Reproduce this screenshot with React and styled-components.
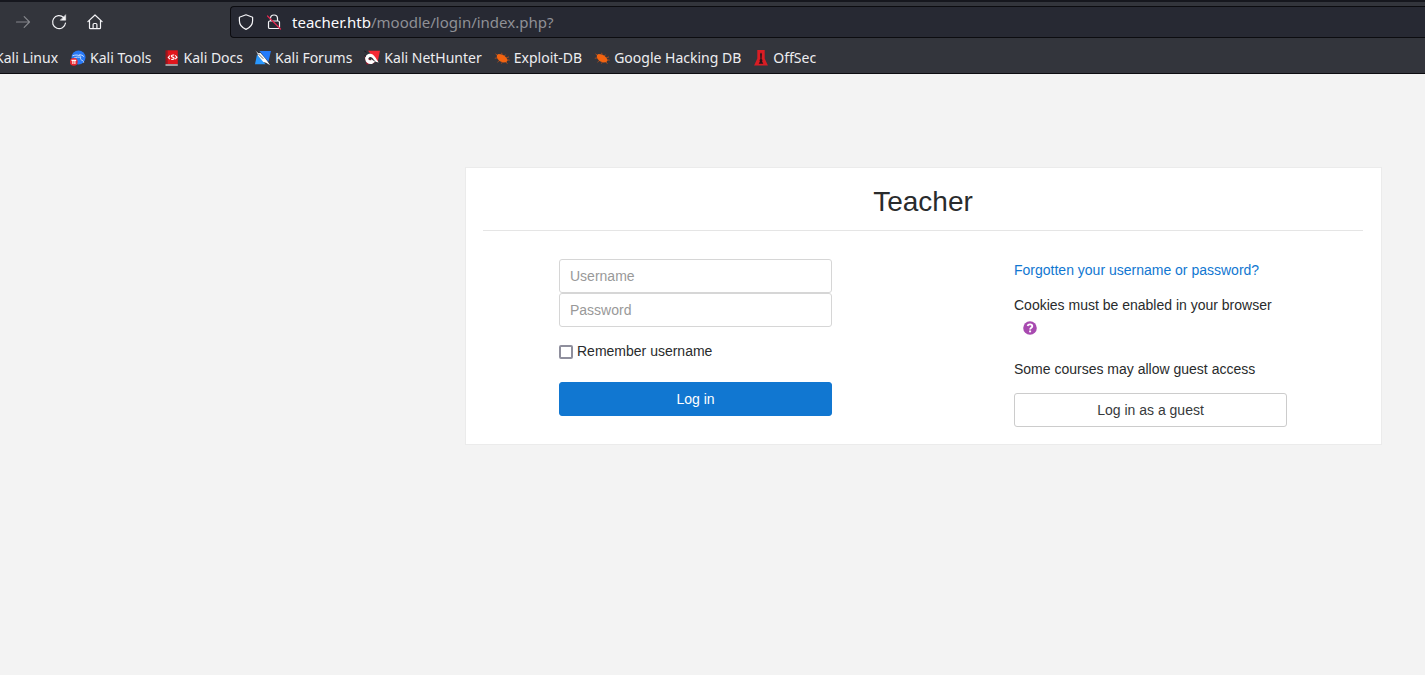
import React from 'react';
import styled, { createGlobalStyle } from 'styled-components';

const GlobalStyle = createGlobalStyle`
  *, *::before, *::after { box-sizing: border-box; }
  body {
    margin: 0;
    background: #f3f3f3;
    color: #292b2c;
    font: 14px/23px "Liberation Sans", Arial, sans-serif;
  }
`;

const Browser = styled.header`
  height: 74px;
  overflow: hidden;
  background: #33353c;
  border-top: 2px solid #16171e;
  border-bottom: 1px solid #0c0c10;
  color: #f4f4f7;
  font-family: "Noto Sans", sans-serif;
`;

const NavBar = styled.div`
  display: flex;
  align-items: center;
  height: 40px;
  padding-left: 12px;
`;

const IconButton = styled.button`
  display: flex;
  padding: 3px;
  margin-right: 14px;
  border: 0;
  background: none;
  color: #f4f4f7;
  &:disabled { color: #85868b; }
`;

const ToolIcon = styled.svg`
  display: block;
  width: 16px;
  height: 16px;
  fill: none;
  stroke: currentColor;
  stroke-width: 1.2;
  stroke-linecap: round;
  stroke-linejoin: round;
`;

const AddressBar = styled.div`
  display: flex;
  flex: 1;
  align-items: center;
  gap: 12px;
  height: 32px;
  margin-left: 110px;
  padding-left: 7px;
  border: 1px solid #0c0c10;
  border-right: 0;
  border-radius: 4px 0 0 4px;
  background: #272933;
`;

const Address = styled.span`
  margin-left: -2px;
  color: #8f9096;
  font-size: 15px;
  line-height: 20px;
  white-space: nowrap;
`;

const Host = styled.span`
  color: #fbfbfe;
`;

const Bookmarks = styled.nav`
  display: flex;
  align-items: center;
  gap: 12px;
  height: 31px;
  margin-left: -5px;
`;

const Bookmark = styled.a`
  display: flex;
  align-items: center;
  gap: 4px;
  color: #ededf0;
  font-size: 14px;
  line-height: 20px;
  text-decoration: none;
  white-space: nowrap;
`;

const Favicon = styled.svg`
  display: block;
  width: 16px;
  height: 16px;
`;

const Page = styled.main`
  padding: 93px 43px 48px 465px;
  @media (max-width: 1200px) { padding-left: 43px; }
`;

const Card = styled.section`
  padding: 17px 18px 17px 17px;
  border: 1px solid #ebebeb;
  background: #fff;
`;

const Title = styled.h1`
  margin: 0;
  padding-bottom: 12px;
  border-bottom: 1px solid #e5e5e5;
  font-size: 28px;
  font-weight: 400;
  line-height: 33px;
  text-align: center;
`;

const Columns = styled.div`
  display: grid;
  grid-template-columns: 1fr 1fr;
  gap: 182px;
  padding: 28px 76px 0;
  @media (max-width: 1000px) { gap: 40px; padding: 28px 20px 0; }
`;

const LoginForm = styled.form`
  display: flex;
  flex-direction: column;
`;

const TextField = styled.input`
  display: block;
  width: 100%;
  height: 34px;
  padding: 0 10px;
  border: 1px solid #d6d6d6;
  border-radius: 3px;
  background: #fff;
  color: #55595c;
  font: inherit;
  &::placeholder { color: #999; opacity: 1; }
`;

const Remember = styled.label`
  display: flex;
  align-items: center;
  gap: 4px;
  margin: 13px 0 19px;
`;

const Checkbox = styled.input`
  appearance: none;
  width: 14px;
  height: 14px;
  margin: 0;
  border: 2px solid #8f8f9d;
  border-radius: 2px;
  background: #fff;
  &:checked { background: #1177d1; }
`;

const Button = styled.button`
  width: 100%;
  height: 34px;
  padding: 0;
  border: 1px solid ${(p) => (p.$primary ? '#1177d1' : '#ccc')};
  border-radius: 3px;
  background: ${(p) => (p.$primary ? '#1177d1' : '#fff')};
  color: ${(p) => (p.$primary ? '#fff' : '#373a3c')};
  font: inherit;
  cursor: pointer;
`;

const Link = styled.a`
  color: #1177d1;
  text-decoration: none;
  &:hover { text-decoration: underline; }
`;

const Cookies = styled.div`
  margin: 12px 0 20px;
`;

const HelpButton = styled.button`
  display: flex;
  align-items: center;
  height: 21px;
  padding: 0;
  margin-left: 9px;
  border: 0;
  background: none;
`;

const HelpIcon = styled.svg`
  display: block;
  width: 14px;
  height: 14px;
`;

const GuestText = styled.p`
  margin: 0 0 12px;
`;

const Bug = () => (
  <Favicon viewBox="0 0 16 16" aria-hidden="true">
    <path d="M1.5 3.8 4 5.600M.8 8.300l3.700-.8M3.500 12.200l2.600-2.300M7.500 2.800l.8 2M11.500 4.600 10 6.500M12.300 7.800l2.700-.9M12.600 9.800l3.200.4M7.500 13.600l1.200-2.500M12 11.800l1.400 2" fill="none" stroke="#b94f1b" strokeWidth=".8" />
    <path d="M2.800 5.200 4.500 3.900l2.300.3 3.300 1.400 2.500 2.300 1 2.500-1.400 1.800-2.900.4-3.400-1.300-2.300-2.400-.7-2z" fill="#f26310" />
  </Favicon>
);

const icons = {
  tools: (
    <Favicon viewBox="0 0 16 16" aria-hidden="true">
      <circle cx="8.500" cy="7.500" r="7" fill="#2878f4" />
      <path d="M2.500 5.800c3.200-1.300 6-.9 8.400.5M3.500 8.400c3-1.700 5.400-1.500 7.300-.8-.7 1.500.2 2.300 1.400 2.700 1.100.5 1.300 1.400 1.500 2.300M9.300 4.600c2 .1 3.500.9 4.600 2.100" fill="none" stroke="#c6dcff" strokeWidth="1" />
      <circle cx="3.800" cy="11.800" r="3.900" fill="#e8262e" />
      <path d="M1.500 10.400h4.700M2.900 10.400v3.500m2-3.500v3.500" fill="none" stroke="#fff" strokeWidth="1.100" />
    </Favicon>
  ),
  docs: (
    <Favicon viewBox="0 0 16 16" aria-hidden="true">
      <path d="M1.500.3h2V14h-2z" fill="#a01219" />
      <path d="M3.500.3h10.300V14H3.500z" fill="#e1151c" />
      <path d="M1.500 14.300h12.300v1.400H1.500z" fill="#d4c6c7" />
      <path d="M6 5.500 4.300 7.500 6 9.200M11.200 5.300 13 7.200l-1.800 2" fill="none" stroke="#fff" strokeWidth="1.100" />
      <path d="M10.200 5.100c-1.800-.3-3 .2-2.700 1.200.2.900 2.500.9 2.600 2 .1.900-1.300 1.400-2.900.9" fill="none" stroke="#fff" strokeWidth="1.200" />
    </Favicon>
  ),
  forums: (
    <Favicon viewBox="0 0 16 16" aria-hidden="true">
      <path d="M4.500 1H16l-2.600 10.700z" fill="#247bfa" />
      <path d="m2 4.500 8.600 9.800H0z" fill="#2998ff" />
      <path d="m.3.2 3.200 3 2-.2 5 5.700 1.700 2.300 2.900 4.300-4-2.500-2.800-.8-5.100-6.100-.8-2.700z" fill="#fff" />
      <path d="m3.500 4 4.800 4.800M.5.3 4 3" fill="none" stroke="#26282e" strokeWidth=".7" />
    </Favicon>
  ),
  nethunter: (
    <Favicon viewBox="0 0 16 16" aria-hidden="true">
      <path d="M4 .8h12l-2.400 11.400z" fill="#f52935" />
      <path d="m.5 6 2.200 8.500L11 13z" fill="#a9152b" />
      <path d="M1.300 9.500C.5 5.800 4 3.100 7.400 4c2.800.7 4 3.600 7.300 8.500l-3-.8-1.900-1.900C8.300 7.400 6.800 6.300 5.100 7.500c-1.700 1.300-.3 3.200 2.300 2.700l-.5-1.100 4.200 2.600-3.100 2.200c-3.300.6-6.300-1-6.700-4.400z" fill="#fff" />
      <path d="m.3 1 2.200 1.300M2 6.500l-1.500-1" stroke="#191b22" />
    </Favicon>
  ),
  bug: <Bug />,
  offsec: (
    <Favicon viewBox="0 0 16 16" aria-hidden="true">
      <path d="M4.300 0h7.400v8.600l3.200 7H1.100l3.200-7z" fill="#d91d24" />
      <path d="M8 2.500 8.900 4l-.3 5 .9 1-.4 1.400 1.200 2.400H5.700l1.200-2.400-.4-1.400.9-1-.3-5z" fill="#26151a" />
    </Favicon>
  ),
};

const bookmarks = [
  { label: 'Kali Tools', icon: 'tools' },
  { label: 'Kali Docs', icon: 'docs' },
  { label: 'Kali Forums', icon: 'forums' },
  { label: 'Kali NetHunter', icon: 'nethunter' },
  { label: 'Exploit-DB', icon: 'bug' },
  { label: 'Google Hacking DB', icon: 'bug' },
  { label: 'OffSec', icon: 'offsec' },
];

export default function App() {
  return (
    <>
      <GlobalStyle />
      <Browser>
        <NavBar>
          <IconButton type="button" aria-label="Forward" disabled>
            <ToolIcon viewBox="0 0 16 16"><path d="M1.500 8h13M9.200 2.700 14.500 8l-5.300 5.300" /></ToolIcon>
          </IconButton>
          <IconButton type="button" aria-label="Reload">
            <ToolIcon viewBox="0 0 16 16">
              <path d="M12.600 3.500A6.500 6.500 0 1 0 14.500 9" />
              <path d="M14.700 1v5.200H9.500z" fill="currentColor" strokeWidth=".5" />
            </ToolIcon>
          </IconButton>
          <IconButton type="button" aria-label="Home">
            <ToolIcon viewBox="0 0 16 16">
              <path d="M.9 7.600 8 1l7.100 6.600M2.500 6.500v7.200q0 1 1 1h9q1 0 1-1V6.500M6.100 14.500v-4q0-1 1-1h1.800q1 0 1 1v4" />
            </ToolIcon>
          </IconButton>
          <AddressBar>
            <ToolIcon viewBox="0 0 16 16" aria-hidden="true">
              <path d="M8 .8 14.600 3.300v3.400c0 3.700-2.400 6.800-6.600 8.700C3.800 13.500 1.400 10.400 1.400 6.700V3.300z" />
            </ToolIcon>
            <ToolIcon viewBox="0 0 16 16" aria-hidden="true">
              <path d="M4.500 7V4.500a3.500 3.500 0 0 1 7 0V7M3.800 7h8.400q1.300 0 1.300 1.300v4.900q0 1.300-1.300 1.300H3.800q-1.300 0-1.300-1.300V8.300Q2.500 7 3.800 7z" />
              <path d="m1.500 2 13 13" stroke="#e22850" />
            </ToolIcon>
            <Address><Host>teacher.htb</Host>/moodle/login/index.php?</Address>
          </AddressBar>
        </NavBar>
        <Bookmarks aria-label="Bookmarks">
          <Bookmark href="#">Kali Linux</Bookmark>
          {bookmarks.map(({ label, icon }) => (
            <Bookmark href="#" key={label}>{icons[icon]}{label}</Bookmark>
          ))}
        </Bookmarks>
      </Browser>
      <Page>
        <Card>
          <Title>Teacher</Title>
          <Columns>
            <LoginForm onSubmit={(e) => e.preventDefault()}>
              <TextField type="text" placeholder="Username" aria-label="Username" />
              <TextField type="password" placeholder="Password" aria-label="Password" />
              <Remember><Checkbox type="checkbox" />Remember username</Remember>
              <Button type="submit" $primary>Log in</Button>
            </LoginForm>
            <div>
              <Link href="#">Forgotten your username or password?</Link>
              <Cookies>
                Cookies must be enabled in your browser
                <HelpButton type="button" aria-label="Help with cookies">
                  <HelpIcon viewBox="0 0 14 14" aria-hidden="true">
                    <circle cx="7" cy="7" r="6.800" fill="#a84ab0" />
                    <path d="M4.600 5C5 2.900 9.300 2.900 9.300 5.200 9.300 6.700 7.100 6.700 7.100 8.400" fill="none" stroke="#fff" strokeWidth="1.800" />
                    <path d="M6.100 9.500h2v1.800h-2z" fill="#fff" />
                  </HelpIcon>
                </HelpButton>
              </Cookies>
              <GuestText>Some courses may allow guest access</GuestText>
              <Button type="button">Log in as a guest</Button>
            </div>
          </Columns>
        </Card>
      </Page>
    </>
  );
}
